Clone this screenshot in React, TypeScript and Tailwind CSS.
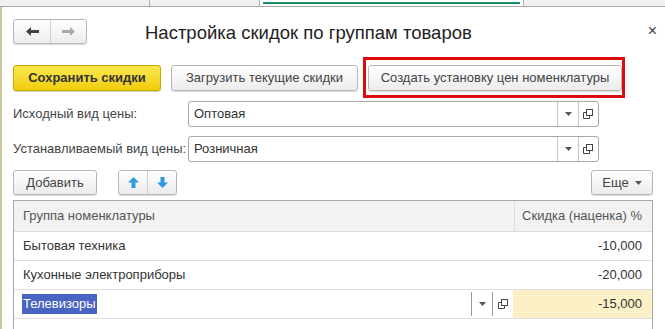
import React from "react";

const font = { fontFamily: '"Liberation Sans", Arial, sans-serif' };

function OpenIcon() {
  return (
    <svg width="11" height="11" viewBox="0 0 11 11">
      <rect x="3.5" y="0.5" width="6" height="6" fill="white" stroke="#444" />
      <path d="M0.5 3.5 V9.5 H6.5 V7" fill="none" stroke="#444" />
      <path d="M0.5 3.5 H3" fill="none" stroke="#444" />
    </svg>
  );
}

function Caret({ color = "#555" }: { color?: string }) {
  return (
    <svg width="7" height="4" viewBox="0 0 7 4">
      <path d="M0 0 H7 L3.5 4 Z" fill={color} />
    </svg>
  );
}

function Field({ value }: { value: string }) {
  return (
    <div className="flex h-[26px] w-[411px] rounded-[3px] border border-[#a8a8a8] bg-white">
      <div className="flex flex-1 items-center pl-[5px] text-[13px] text-[#333]">{value}</div>
      <div className="flex w-[21px] items-center justify-center border-l border-[#c8c8c8]">
        <Caret />
      </div>
      <div className="flex w-[20px] items-center justify-center border-l border-[#c8c8c8]">
        <OpenIcon />
      </div>
    </div>
  );
}

function Btn({ children, className = "" }: { children: React.ReactNode; className?: string }) {
  return (
    <div
      className={
        "flex items-center justify-center rounded-[3px] border border-[#b8b8b8] bg-gradient-to-b from-white to-[#ececec] text-[13px] text-[#444] shadow-[0_1px_1px_rgba(0,0,0,0.15)] " +
        className
      }
    >
      {children}
    </div>
  );
}

export default function App() {
  return (
    <div className="relative h-[329px] w-[665px] overflow-hidden bg-white" style={font}>
      {/* tab strip */}
      <div className="flex h-[7px] border-b border-[#a6a6a6] bg-[#f0f0f0]">
        <div className="w-[150px] border-r border-[#b0b0b0]" />
        <div className="w-[110px] border-r border-[#b0b0b0]" />
        <div className="relative w-[263px] bg-white">
          <div className="absolute left-[3px] right-[3px] top-[2px] h-[2px] bg-[#16915a]" />
        </div>
        <div className="flex-1 border-l border-[#b0b0b0]" />
      </div>

      <div className="flex h-[322px] border-l-2 border-[#cbc69c]">
        <div className="flex w-full flex-col pl-[11px] pr-[12px]">
          {/* nav + title */}
          <div className="mt-[11px] flex h-[26px] items-center">
            <div className="flex h-[25px] w-[74px] rounded-[3px] border border-[#b8b8b8] bg-gradient-to-b from-white to-[#ececec] shadow-[0_1px_1px_rgba(0,0,0,0.15)]">
              <div className="flex w-[37px] items-center justify-center border-r border-[#d0d0d0]">
                <svg width="13" height="9" viewBox="0 0 13 9">
                  <path d="M0 4.5 L5 0 V3 H13 V6 H5 V9 Z" fill="#444" />
                </svg>
              </div>
              <div className="flex flex-1 items-center justify-center">
                <svg width="13" height="9" viewBox="0 0 13 9">
                  <path d="M13 4.5 L8 0 V3 H0 V6 H8 V9 Z" fill="#a8a8a8" />
                </svg>
              </div>
            </div>
            <div className="ml-[58px] mt-[3px] text-[18.5px] text-[#222]">Настройка скидок по группам товаров</div>
            <div className="ml-auto mr-[-4px] text-[16px] leading-none text-[#444]">×</div>
          </div>

          {/* buttons row */}
          <div className="relative mt-[21px] flex h-[26px] items-center">
            <div className="flex h-[26px] w-[148px] items-center justify-center rounded-[3px] border border-[#c9a800] bg-gradient-to-b from-[#fbe84a] to-[#f1cd00] text-[13px] font-bold text-[#333] shadow-[0_1px_1px_rgba(0,0,0,0.2)]">
              Сохранить скидки
            </div>
            <Btn className="ml-[10px] h-[26px] w-[187px]">Загрузить текущие скидки</Btn>
            <Btn className="ml-[10px] h-[26px] w-[254px]">Создать установку цен номенклатуры</Btn>
            <div className="pointer-events-none absolute left-[350px] top-[-8px] h-[41px] w-[262px] border-[3px] border-[#dd0b0b]" />
          </div>

          {/* fields */}
          <div className="mt-[10px] flex items-center">
            <div className="w-[175px] text-[13px] text-[#444]">Исходный вид цены:</div>
            <Field value="Оптовая" />
          </div>
          <div className="mt-[9px] flex items-center">
            <div className="w-[175px] text-[13px] text-[#444]">Устанавливаемый вид цены:</div>
            <Field value="Розничная" />
          </div>

          {/* toolbar */}
          <div className="mt-[8px] flex h-[25px] items-center">
            <Btn className="h-[25px] w-[84px]">Добавить</Btn>
            <div className="ml-[21px] flex h-[25px] w-[59px] rounded-[3px] border border-[#b8b8b8] bg-gradient-to-b from-white to-[#ececec] shadow-[0_1px_1px_rgba(0,0,0,0.15)]">
              <div className="flex w-[29px] items-center justify-center border-r border-[#d0d0d0]">
                <svg width="11" height="11" viewBox="0 0 11 11">
                  <path d="M5.5 0 L11 5.5 H7.5 V11 H3.5 V5.5 H0 Z" fill="#2f9ae0" />
                </svg>
              </div>
              <div className="flex flex-1 items-center justify-center">
                <svg width="11" height="11" viewBox="0 0 11 11">
                  <path d="M5.5 11 L11 5.5 H7.5 V0 H3.5 V5.5 H0 Z" fill="#2f9ae0" />
                </svg>
              </div>
            </div>
            <Btn className="ml-auto h-[25px] w-[62px] gap-[6px]">
              <span>Еще</span>
              <Caret />
            </Btn>
          </div>

          {/* table */}
          <div className="mt-[5px] flex flex-1 flex-col border border-b-0 border-[#a8a8a8] text-[13px] text-[#333]">
            <div className="flex h-[31px] border-b border-[#dcdcdc] bg-[#f2f2f2] text-[#555]">
              <div className="flex flex-1 items-center pl-[9px]">Группа номенклатуры</div>
              <div className="flex w-[138px] items-center justify-end border-l border-[#dcdcdc] pr-[10px]">
                Скидка (наценка) %
              </div>
            </div>
            <div className="flex h-[29px] border-b border-[#e0e0e0]">
              <div className="flex flex-1 items-center pl-[9px]">Бытовая техника</div>
              <div className="flex w-[138px] items-center justify-end pr-[10px]">-10,000</div>
            </div>
            <div className="flex h-[29px] border-b border-[#e0e0e0]">
              <div className="flex flex-1 items-center pl-[9px]">Кухонные электроприборы</div>
              <div className="flex w-[138px] items-center justify-end pr-[10px]">-20,000</div>
            </div>
            <div className="flex h-[29px] border-b border-[#e0e0e0]">
              <div className="flex flex-1 items-center pl-[8px]">
                <span className="bg-[#4a64c4] px-[1px] text-white">Телевизоры</span>
              </div>
              <div className="my-[2px] flex w-[21px] items-center justify-center border-l border-[#9a9a9a]">
                <Caret />
              </div>
              <div className="my-[2px] flex w-[21px] items-center justify-center border-l border-[#9a9a9a]">
                <OpenIcon />
              </div>
              <div className="flex w-[139px] items-center justify-end bg-[#fcf0c6] pr-[10px]">-15,000</div>
            </div>
            <div className="flex-1" />
          </div>
        </div>
      </div>
    </div>
  );
}
